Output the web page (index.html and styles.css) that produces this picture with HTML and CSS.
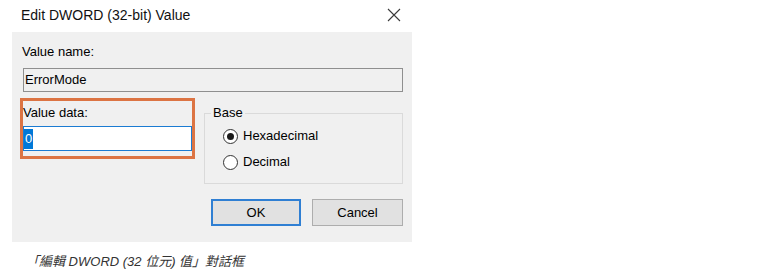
FILE: index.html
```html
<!DOCTYPE html>
<html>
<head>
<meta charset="utf-8">
<link rel="stylesheet" href="styles.css">
</head>
<body>
<div class="dialog">
  <div class="titlebar">
    <span class="title">Edit DWORD (32-bit) Value</span>
    <svg class="close" width="14" height="14" viewBox="0 0 14 14"><path d="M1 1 L13 13 M13 1 L1 13" stroke="#3a3a3a" stroke-width="1.1" fill="none"/></svg>
  </div>
  <div class="panel">
    <div class="label name-label">Value name:</div>
    <div class="namebox">ErrorMode</div>
    <div class="row">
      <div class="highlight">
        <div class="label">Value data:</div>
        <div class="databox"><span class="sel">0</span></div>
      </div>
      <fieldset class="group">
        <legend class="legend">Base</legend>
        <div class="radio"><span class="circle checked"></span><span class="rtext">Hexadecimal</span></div>
        <div class="radio"><span class="circle"></span><span class="rtext">Decimal</span></div>
      </fieldset>
    </div>
    <div class="buttons">
      <div class="btn default">OK</div>
      <div class="btn">Cancel</div>
    </div>
  </div>
  <div class="caption">「編輯 DWORD (32 位元) 值」對話框</div>
</div>
</body>
</html>
```
FILE: styles.css
```css
html, body {
  margin: 0;
  padding: 0;
  background: #ffffff;
}
body {
  width: 762px;
  height: 278px;
  font-family: "Liberation Sans", Arial, sans-serif;
  color: #000;
}
.dialog {
  width: 412px;
}
.titlebar {
  height: 32px;
  box-sizing: border-box;
  padding: 6px 11px 0 21px;
  display: flex;
  justify-content: space-between;
  align-items: flex-start;
}
.title {
  font-size: 14px;
  line-height: 18px;
  color: #111;
}
.close {
  margin-top: 2px;
}
.panel {
  margin-left: 12px;
  width: 400px;
  height: 210px;
  box-sizing: border-box;
  background: #f0f0f0;
  padding: 12px 9px 0 8px;
}
.label {
  font-size: 13px;
  line-height: 16px;
}
.name-label {
  padding-left: 2px;
}
.namebox {
  margin: 8px 0 0 3px;
  height: 24px;
  box-sizing: border-box;
  border: 1px solid #8f8f8f;
  background: #f0f0f0;
  font-size: 13px;
  line-height: 22px;
  padding-left: 1px;
}
.row {
  display: flex;
  align-items: flex-start;
  margin-top: 6px;
}
.highlight {
  width: 175px;
  height: 61px;
  box-sizing: border-box;
  border: 3px solid #dc7443;
  padding-top: 4px;
}
.databox {
  margin-top: 5px;
  height: 25px;
  box-sizing: border-box;
  border: 1px solid #1b7bd2;
  background: #fff;
  font-size: 13px;
  line-height: 21px;
  padding: 1px 0 0 0;
}
.sel {
  background: #0078d7;
  color: #fff;
  display: inline-block;
  padding: 0 1px;
  line-height: 20px;
}
.group {
  margin: 7px 0 0 9px;
  width: 199px;
  height: 79px;
  box-sizing: border-box;
  border: 1px solid #dadada;
  padding: 0 0 0 18px;
  min-width: 0;
}
.legend {
  margin-left: -12px;
  padding: 0 2px;
  font-size: 13px;
  line-height: 16px;
}
.radio {
  height: 26px;
  display: flex;
  align-items: center;
}
.radio:first-of-type {
  margin-top: 2px;
}
.circle {
  width: 15px;
  height: 15px;
  box-sizing: border-box;
  border: 1px solid #333;
  border-radius: 50%;
  background: #fff;
  display: flex;
  align-items: center;
  justify-content: center;
}
.circle.checked::after {
  content: "";
  width: 7px;
  height: 7px;
  border-radius: 50%;
  background: #1a1a1a;
}
.rtext {
  margin-left: 5px;
  font-size: 13px;
  line-height: 16px;
}
.buttons {
  display: flex;
  justify-content: flex-end;
  gap: 11px;
  margin-top: 15px;
}
.btn {
  width: 91px;
  height: 27px;
  box-sizing: border-box;
  border: 1px solid #adadad;
  background: #e1e1e1;
  font-size: 13px;
  display: flex;
  align-items: center;
  justify-content: center;
}
.btn.default {
  width: 90px;
  border: 2px solid #2f7fd3;
}
.caption {
  margin: 10px 0 0 26px;
  font-family: "Liberation Sans", "Noto Sans CJK TC", sans-serif;
  font-style: italic;
  font-size: 13px;
  line-height: 20px;
  color: #333;
  white-space: nowrap;
}
```
